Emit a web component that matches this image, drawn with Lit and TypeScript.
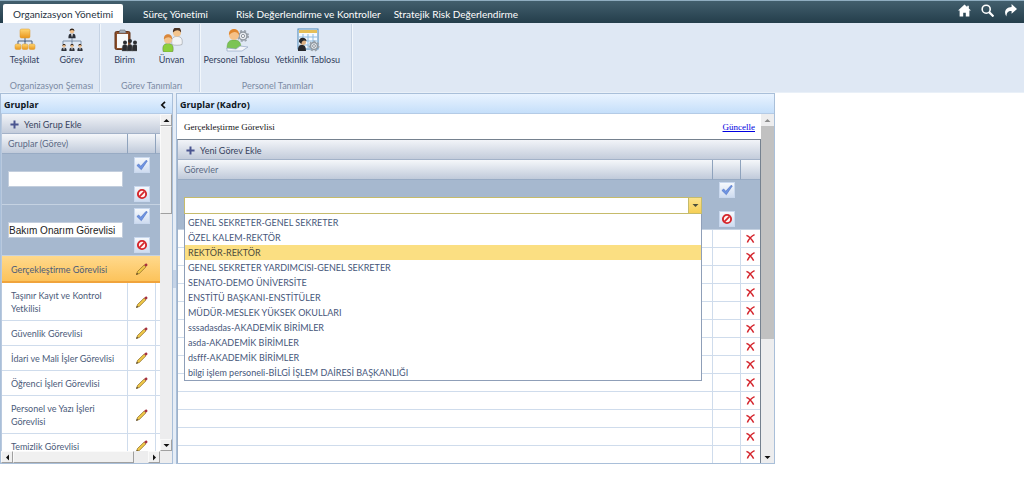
import { LitElement, html, svg, css, TemplateResult } from "lit";
import { customElement, property, state } from "lit/decorators.js";
import { classMap } from "lit/directives/class-map.js";

const person = (x: number, y: number, hair: string, coat: string) => svg`
  <path d="M${x - 5} ${y + 12}c-1-6 1-8 5-8s6 2 5 8c-2 1-8 1-10 0z" fill=${coat} stroke="#0003"/>
  <circle cx=${x} cy=${y} r="4" fill="#f3c48d"/>
  <path d="M${x - 4} ${y}c-1-7 9-7 8 0c-2-3-5-3-8 0z" fill=${hair}/>`;

const mini = (x: number, y: number, s: number) => svg`
  <g transform="translate(${x} ${y}) scale(${s})">
    <path d="M-4 7c0-5 1.500-5 4-5s4 0 4 5z" fill="#2b2f38"/><path d="M-1 2h2l-1 4z" fill="#fff"/>
    <circle r="2.600" cy="-1" fill="#f0c08c"/><path d="M-2.600-1c-.5-4 5.700-4 5.200 0-2-1.500-3-1.500-5.200 0z" fill="#33261c"/>
  </g>`;

const gear = (x: number, y: number, r: number) => svg`
  <circle cx=${x} cy=${y} r=${r} fill="#e8ecf0" stroke="#8d959e" stroke-width="1.500"/>
  <circle cx=${x} cy=${y} r=${r + 1} fill="none" stroke="#9aa3ac" stroke-width="2" stroke-dasharray="2 2"/>
  <circle cx=${x} cy=${y} r=${r / 2.5} fill="#fff" stroke="#8d959e"/>`;

const icons: Record<string, TemplateResult> = {
  orgchart: html`<svg viewBox="0 0 24 24"><defs><linearGradient id="o" x2="0" y2="1"><stop stop-color="#ffd773"/><stop offset="1" stop-color="#e9961c"/></linearGradient></defs>
    <path d="M12 10v4M5 16v-3h14v3M12 13v3" stroke="#4a5f7c" fill="none"/><g fill="url(#o)" stroke="#dd9a2e" stroke-width=".5"><rect x="7" y="1" width="10" height="9" rx="1.500"/><rect x="2" y="16" width="6" height="5.500" rx="1.500"/><rect x="9" y="16" width="6" height="5.500" rx="1.500"/><rect x="16" y="16" width="6" height="5.500" rx="1.500"/></g></svg>`,
  hierarchy: html`<svg viewBox="0 0 24 24"><path d="M12 10v4M3 16v-3h18v3M12 13v3" stroke="#7e93ac" fill="none"/>${mini(12, 4, 0.9)}${mini(4, 18.5, 0.65)}${mini(12, 18.5, 0.65)}${mini(20, 18.5, 0.65)}</svg>`,
  clipboard: html`<svg viewBox="0 0 24 24"><rect x="2" y="3.500" width="15" height="18" rx="1.500" fill="#8c4f2b" stroke="#63351b"/><path d="M4 6h11v12l-2 2H4z" fill="#f7f9fb"/><path d="M6 5l1-3h5l1 3z" fill="#a6aeb8" stroke="#6c747e" stroke-width=".6"/>
    ${[12, 17, 22].map((x) => svg`<circle cx=${x} cy=${x === 17 ? 13 : 14.5} r="2" fill="#2a2c31"/><path d="M${x - 3} 23c0-6 1-6.500 3-6.500s2.500.5 2.500 6.500z" fill="#2a2c31" stroke="#777" stroke-width=".4"/>`)}</svg>`,
  people: html`<svg viewBox="0 0 24 24">${person(17, 4.5, "#4b3325", "#f1f3f6")}${person(8, 11.5, "#d9863a", "#8ccf3c")}</svg>`,
  staff: html`<svg viewBox="0 0 24 24">${gear(18, 8, 4)}<path d="M2 21c0-7 2-9 7-9s7 2 7 9z" fill="#7cc454" stroke="#5c9e3b" stroke-width=".5"/><circle cx="9" cy="7" r="5" fill="#f6c188"/><path d="M4 7c-1-8 11-8 10 0-2-4-6-4-10 0z" fill="#e0872f"/><path d="M2 20l9 1 4-3 8 1-6 4H2z" fill="#f4f6fa" stroke="#94a6c4" stroke-width=".7"/></svg>`,
  matrix: html`<svg viewBox="0 0 24 24"><rect x="2" y="1" width="20" height="20" fill="#f5faff" stroke="#4b86b8"/><path d="M3 3.500h18" stroke="#e6bf58" stroke-width="3"/><path d="M3 9h18M3 13h18M3 17h18M7 6v15M12 6v15M17 6v15" stroke="#8fbbe0"/><circle cx="7" cy="14" r="3" fill="#dcb184"/><path d="M3 14c-.5-6 8-5 7.500-1-3-1.500-5 0-5 3zM2 23c0-5 1-6 4-6s4 2 4 6z" fill="#25272c"/>${gear(18, 18, 3.5)}</svg>`,
  home: html`<svg viewBox="0 0 12 12"><path d="M6 0.500L0 6h1.500v5.500h3.300V8h2.400v3.500h3.300V6H12L10 4.200V1.500H8.500v1.300z" fill="#fff"/></svg>`,
  search: html`<svg viewBox="0 0 12 12"><circle cx="4.800" cy="4.800" r="3.700" fill="none" stroke="#fff" stroke-width="1.500"/><path d="M7.500 7.500l4 4" stroke="#fff" stroke-width="2"/></svg>`,
  share: html`<svg viewBox="0 0 12 12"><path d="M7 0l5 4.500L7 9V6.400C4 6.200 2.500 7.500 2.200 11.500-.5 7.500 1.500 3 7 2.800z" fill="#fff"/></svg>`,
  plus: html`<svg viewBox="0 0 10 10"><path d="M5 0.500v9M0.500 5h9" stroke="#4a5590" stroke-width="2.200"/></svg>`,
  check: html`<svg viewBox="0 0 14 14"><path d="M1 7.500l2.200-1.700 2.300 2.700L11.800 1.500l1.400.8L6.200 12.500z" fill="#6f94e2" stroke="#4268bd" stroke-width=".6"/></svg>`,
  deny: html`<svg viewBox="0 0 14 14"><circle cx="7" cy="7" r="4.800" fill="#fff4f2" stroke="#d5262c" stroke-width="2.200"/><path d="M4 10l6-6" stroke="#d5262c" stroke-width="2"/></svg>`,
  pencil: html`<svg viewBox="0 0 12 12"><path d="M.5 11.500l1-3L8.200 2 10 3.800 3.400 10.400z" fill="#f0c948" stroke="#85631f" stroke-width=".7"/><path d="M8.200 2l1.300-1.300c1-.8 2.600.8 1.800 1.800L10 3.800z" fill="#a62f3e"/><path d="M.3 11.700l.6-1.700 1.100 1.100z" fill="#222"/></svg>`,
  cross: html`<svg viewBox="0 0 10 10"><path d="M.5 1.500C3 2.500 6.500 6 8.500 9.500M9.500 .8C6 2.500 3 6 1.500 9.500" stroke="#d4242c" stroke-width="1.600" fill="none"/></svg>`,
  collapse: html`<svg viewBox="0 0 6 8"><path d="M5 .8L1.800 4 5 7.200" stroke="#111" stroke-width="1.700" fill="none"/></svg>`,
  up: html`<svg viewBox="0 0 7 7"><path d="M0.500 5h6L3.500 2z" fill="currentColor"/></svg>`,
  down: html`<svg viewBox="0 0 7 7"><path d="M0.500 2h6L3.500 5z" fill="currentColor"/></svg>`,
  left: html`<svg viewBox="0 0 7 7"><path d="M5 .5v6L2 3.500z" fill="currentColor"/></svg>`,
  right: html`<svg viewBox="0 0 7 7"><path d="M2 .5v6l3-3z" fill="currentColor"/></svg>`,
};

const shared = css`
  * { box-sizing: border-box; }
  svg { display: block; width: 100%; height: 100%; }
  button, input { font: inherit; color: inherit; margin: 0; padding: 0; border: 0; background: none; border-radius: 0; outline: 0; }
  table { border-collapse: separate; border-spacing: 0; table-layout: fixed; width: 100%; }
  td, th { padding: 0; font-weight: 400; text-align: left; }
  .toolbar { display: flex; align-items: center; height: 20px; padding: 2px 0 0 8px; background: linear-gradient(#f2f4f8, #c3ccdb); border-bottom: 1px solid #a3b2c8; }
  .add { display: flex; align-items: center; gap: 5px; font-size: 9px; color: #38445e; }
  .add svg { width: 9px; height: 9px; }
  thead th { height: 20px; padding-left: 6px; font-size: 9px; color: #5b6a85; background: linear-gradient(#f5f7fa, #c0cada); border-right: 1px solid #8fa3bd; border-bottom: 1px solid #98abc4; }
  th:last-child, .edit td { border-right: 0; }
  .edit td { height: 51px; background: #a6b8cf; border-bottom: 1px solid #c5d2e2; vertical-align: middle; }
  .actions { display: flex; flex-direction: column; gap: 13px; width: 16px; margin: 0 auto; }
  .square { width: 16px; height: 16px; padding: 1px; background: linear-gradient(#f6f9fd, #cfdcf0); border: 1px solid #c9d8ee; }
`;

@customElement("ribbon-bar")
export class RibbonBar extends LitElement {
  static styles = [shared, css`
    :host { display: block; }
    .tabs { display: flex; height: 23px; padding: 3px 7px 0 3px; border-top: 1px solid #8fadc0; background: linear-gradient(#425f6d, #243e4b); color: #fff; font-size: 10px; }
    .tab { height: 19px; padding: 0 10px; white-space: nowrap; }
    .tab.active { background: #fff; color: #26323f; border-radius: 2px 2px 0 0; margin-right: 10px; }
    .tab.wide { margin-left: 8px; }
    .tab.last { padding-left: 3px; }
    .tools { display: flex; gap: 10px; margin-left: auto; }
    .tools button { width: 13px; height: 13px; }
    .ribbon { display: flex; height: 70px; padding-left: 1px; background: #dfe8f4; border-bottom: 1px solid #e9f0f8; }
    .group { display: flex; flex-direction: column; justify-content: space-between; padding-top: 4px; margin: 1px 1px 0 0; border-right: 1px solid #c6d3e4; box-shadow: 1px 0 #f2f7fc; }
    .items { display: flex; padding-right: 4px; }
    .broad .items { padding-right: 8px; }
    .item { width: 47px; font-size: 9px; line-height: 11px; color: #33415c; white-space: nowrap; }
    .broad .item { width: 71px; }
    .glyph { display: block; width: 24px; height: 24px; margin: 0 auto 2px; }
    .caption { font-size: 9px; line-height: 13px; color: #7c8ba4; text-align: center; padding-left: 3px; }
  `];
  @state() active = 0;
  tabs = ["Organizasyon Yönetimi", "Süreç Yönetimi", "Risk Değerlendirme ve Kontroller", "Stratejik Risk Değerlendirme"];
  groups = [
    { name: "Organizasyon Şeması", broad: false, items: [["orgchart", "Teşkilat"], ["hierarchy", "Görev"]] },
    { name: "Görev Tanımları", broad: false, items: [["clipboard", "Birim"], ["people", "Ünvan"]] },
    { name: "Personel Tanımları", broad: true, items: [["staff", "Personel Tablosu"], ["matrix", "Yetkinlik Tablosu"]] },
  ];
  render() {
    return html`
      <nav class="tabs">
        ${this.tabs.map((t, i) => html`<button class=${classMap({ tab: true, active: i === this.active, wide: i === 2, last: i === 3 })} @click=${() => (this.active = i)}>${t}</button>`)}
        <div class="tools">
          <button aria-label="Ana sayfa">${icons.home}</button><button aria-label="Ara">${icons.search}</button><button aria-label="Paylaş">${icons.share}</button>
        </div>
      </nav>
      <div class="ribbon">
        ${this.groups.map((g) => html`<section class=${classMap({ group: true, broad: g.broad })}>
          <div class="items">${g.items.map(([icon, label]) => html`<button class="item"><span class="glyph">${icons[icon]}</span>${label}</button>`)}</div>
          <div class="caption">${g.name}</div>
        </section>`)}
      </div>`;
  }
}

@customElement("scroll-rail")
export class ScrollRail extends LitElement {
  static styles = [shared, css`
    :host { display: flex; flex-direction: column; background: #ededee; color: #111; }
    :host([horizontal]) { flex-direction: row; }
    button { flex: none; width: 12px; height: 12px; display: grid; place-items: center; }
    button svg { width: 7px; height: 7px; }
    .thumb { flex: none; background: #c1c1c1; }
    .gap { flex: 1; }
    :host(:not([classic])) button:first-child { color: #8c8c8c; }
    :host([classic]) button, :host([classic]) .thumb { background: #f0f0f0; border: 1px solid; border-color: #fafafa #a0a0a0 #a0a0a0 #fafafa; }
  `];
  @property({ type: Boolean, reflect: true }) horizontal = false;
  @property({ type: Boolean, reflect: true }) classic = false;
  @property({ type: Number }) size = 50;
  render() {
    const side = this.horizontal ? "width" : "height";
    return html`
      <button aria-label="Geri">${this.horizontal ? icons.left : icons.up}</button>
      <div class="thumb" style="${side}:${this.size}%"></div><div class="gap"></div>
      <button aria-label="İleri">${this.horizontal ? icons.right : icons.down}</button>`;
  }
}

@customElement("group-list")
export class GroupList extends LitElement {
  static styles = [shared, css`
    :host { display: grid; grid-template: minmax(0, 1fr) 12px / minmax(0, 1fr) 12px; min-height: 0; background: #ededee; }
    .view { overflow: hidden; border-left: 1px solid #b9c9de; }
    col.action { width: 28px; }
    col.end { width: 4px; }
    .edit td:first-child { padding: 0 5px 0 6px; }
    .edit input { display: block; width: 100%; height: 16px; background: #fff; border: 1px solid #c3cedd; font: 10px "Liberation Sans", sans-serif; color: #222; }
    .row td { height: 25px; padding: 6px 0 5px 9px; line-height: 13px; border-right: 1px solid #cfdcec; border-bottom: 1px solid #cfdcec; color: #4b5b7a; font-size: 9px; background: #fff; }
    .row td.cell { padding: 0; }
    .row td:last-child { border-right: 0; padding: 0; }
    .row.selected td { height: 27px; background: linear-gradient(#ffd98c, #fcc35b); border-bottom: 2px solid #f0a43c; border-right: 0; }
    .pencil { display: block; width: 12px; height: 12px; margin: 0 auto; }
  `];
  rows = ["Gerçekleştirme Görevlisi", "Taşınır Kayıt ve Kontrol Yetkilisi", "Güvenlik Görevlisi", "İdari ve Mali İşler Görevlisi", "Öğrenci İşleri Görevlisi", "Personel ve Yazı İşleri Görevlisi", "Temizlik Görevlisi"];
  @state() selected = 0;
  render() {
    return html`
      <div class="view">
        <div class="toolbar"><button class="add">${icons.plus}Yeni Grup Ekle</button></div>
        <table>
          <colgroup><col /><col class="action" /><col class="end" /></colgroup>
          <thead><tr><th>Gruplar (Görev)</th><th></th><th></th></tr></thead>
          <tbody>
            ${["", "Bakım Onarım Görevlisi"].map((v) => html`<tr class="edit"><td><input type="text" aria-label="Grup adı" .value=${v} /></td>
              <td><div class="actions"><button class="square" aria-label="Kaydet">${icons.check}</button><button class="square" aria-label="İptal">${icons.deny}</button></div></td><td></td></tr>`)}
            ${this.rows.map((r, i) => html`<tr class=${classMap({ row: true, selected: i === this.selected })} @click=${() => (this.selected = i)}><td>${r}</td><td class="cell"><button class="pencil" aria-label="Düzenle">${icons.pencil}</button></td><td></td></tr>`)}
          </tbody>
        </table>
      </div>
      <scroll-rail classic size="26"></scroll-rail>
      <scroll-rail classic horizontal size="76"></scroll-rail>`;
  }
}

@customElement("duty-grid")
export class DutyGrid extends LitElement {
  static styles = [shared, css`
    :host { display: grid; grid-template-columns: minmax(0, 1fr) 13px; min-height: 0; }
    .view { display: flex; flex-direction: column; overflow: hidden; min-height: 0; }
    .title { display: flex; flex: none; justify-content: space-between; align-items: center; height: 25px; padding: 0 6px 0 7px; font: 9px "Liberation Serif", serif; color: #111; }
    .title a { color: #0000e0; }
    .grid { flex: 1; min-height: 0; border: 1px solid #75818f; border-bottom: 0; border-left-color: #9fb1c8; }
    col.action { width: 28px; }
    col.end { width: 19px; }
    .edit td { height: 50px; }
    .edit td:first-child { padding: 2px 11px 0 6px; }
    .row td { height: 18px; border-right: 1px solid #cfdcec; border-bottom: 1px solid #cfdcec; background: #fff; }
    .row td:last-child { border-right: 0; }
    .remove { display: block; width: 9px; height: 9px; margin: 0 auto; }
    .combo { position: relative; display: flex; height: 17px; background: #fff; border: 1px solid #c6bb6b; }
    .combo input { flex: 1; min-width: 0; padding: 0 4px; font-size: 9px; }
    .arrow { width: 13px; display: grid; place-items: center; color: #4b4f3c; background: linear-gradient(#fbe38e, #f6cf55); border-left: 1px solid #c6bb6b; }
    .arrow svg { width: 7px; height: 7px; }
    .options { position: absolute; z-index: 2; top: 16px; left: -1px; right: -1px; margin: 0; padding: 1px 0 0; list-style: none; background: #fff; border: 1px solid #8f9fb8; border-top: 0; font-size: 9px; line-height: 15px; color: #46567a; }
    .options li { padding-left: 3px; white-space: nowrap; }
    .options li.hover { background: #fbdf82; color: #4c4a3c; }
  `];
  options = ["GENEL SEKRETER-GENEL SEKRETER", "ÖZEL KALEM-REKTÖR", "REKTÖR-REKTÖR", "GENEL SEKRETER YARDIMCISI-GENEL SEKRETER", "SENATO-DEMO ÜNİVERSİTE", "ENSTİTÜ BAŞKANI-ENSTİTÜLER", "MÜDÜR-MESLEK YÜKSEK OKULLARI", "sssadasdas-AKADEMİK BİRİMLER", "asda-AKADEMİK BİRİMLER", "dsfff-AKADEMİK BİRİMLER", "bilgi işlem personeli-BİLGİ İŞLEM DAİRESİ BAŞKANLIĞI"];
  @state() hover = 2;
  render() {
    return html`
      <div class="view">
        <div class="title"><span>Gerçekleştirme Görevlisi</span><a href="#">Güncelle</a></div>
        <div class="grid">
          <div class="toolbar"><button class="add">${icons.plus}Yeni Görev Ekle</button></div>
          <table>
            <colgroup><col /><col class="action" /><col class="end" /></colgroup>
            <thead><tr><th>Görevler</th><th></th><th></th></tr></thead>
            <tbody>
              <tr class="edit">
                <td><div class="combo"><input type="text" role="combobox" aria-expanded="true" aria-label="Görev" /><button class="arrow" aria-label="Listeyi aç">${icons.down}</button>
                  <ul class="options" role="listbox">${this.options.map((o, i) => html`<li role="option" class=${classMap({ hover: i === this.hover })} @mouseenter=${() => (this.hover = i)}>${o}</li>`)}</ul></div></td>
                <td><div class="actions"><button class="square" aria-label="Kaydet">${icons.check}</button><button class="square" aria-label="İptal">${icons.deny}</button></div></td><td></td>
              </tr>
              ${Array.from({ length: 13 }, () => html`<tr class="row"><td></td><td></td><td><button class="remove" aria-label="Sil">${icons.cross}</button></td></tr>`)}
            </tbody>
          </table>
        </div>
      </div>
      <scroll-rail size="61"></scroll-rail>`;
  }
}

@customElement("app-root")
export class AppRoot extends LitElement {
  static styles = [shared, css`
    :host { display: flex; flex-direction: column; height: 100vh; background: #fff; font-family: Lato, "Open Sans", sans-serif; font-variant-ligatures: none; }
    .workspace { flex: 1; min-height: 0; display: grid; grid-template-columns: 173px 3px minmax(0, 599px); padding-bottom: 29px; }
    .panel { display: flex; flex-direction: column; min-height: 0; border: 1px solid #a9bfd9; }
    .panel > :last-child { flex: 1; }
    .head { display: flex; flex: none; align-items: center; justify-content: space-between; height: 20px; padding: 2px 6px 0 3px; background: linear-gradient(#e9f3ff, #c5dffa); border-bottom: 1px solid #b4cbe6; }
    h2 { margin: 0; font: 700 9px "Open Sans", sans-serif; color: #0c1420; }
    .fold { width: 6px; height: 8px; }
    .splitter { display: grid; align-items: center; background: #e6edf6; }
    .handle { height: 18px; background: #c5d3e6; }
  `];
  render() {
    return html`
      <ribbon-bar></ribbon-bar>
      <main class="workspace">
        <section class="panel"><header class="head"><h2>Gruplar</h2><button class="fold" aria-label="Daralt">${icons.collapse}</button></header><group-list></group-list></section>
        <div class="splitter"><div class="handle"></div></div>
        <section class="panel"><header class="head"><h2>Gruplar (Kadro)</h2></header><duty-grid></duty-grid></section>
      </main>`;
  }
}
